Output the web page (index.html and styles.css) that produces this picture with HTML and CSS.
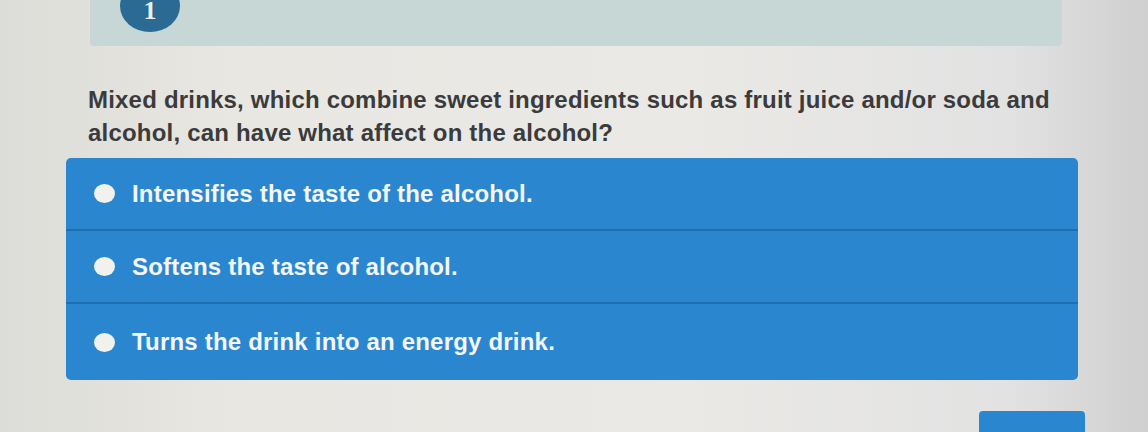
FILE: index.html
```html
<!DOCTYPE html>
<html>
<head>
    <title>Quiz</title>
    <link rel="stylesheet" href="styles.css">
</head>
<body>
    <div class="page">
        <!-- Question header with number badge -->
        <div class="question-head">
            <span class="badge">1</span>
        </div>

        <p class="question">Mixed drinks, which combine sweet ingredients such as fruit juice and/or soda and<br>alcohol, can have what affect on the alcohol?</p>

        <!-- Answer choices -->
        <ul class="choices">
            <li class="choice"><span class="radio"></span>Intensifies the taste of the alcohol.</li>
            <li class="choice"><span class="radio"></span>Softens the taste of alcohol.</li>
            <li class="choice"><span class="radio"></span>Turns the drink into an energy drink.</li>
        </ul>

        <div class="actions">
            <button class="next-btn" type="button"></button>
        </div>
    </div>
</body>
</html>
```

FILE: styles.css
```css
body {
    margin: 0;
    padding: 0;
    height: 432px;
    overflow: hidden;
    font-family: "Liberation Sans", Arial, sans-serif;
    background: linear-gradient(90deg, #dcdcd8 0%, #e8e7e2 20%, #eae9e6 60%, #e2e2e2 88%, #cfcfcf 100%);
}

.page {
    width: 1010px;
    margin: 0 0 0 70px;
}

.question-head {
    margin-left: 20px;
    width: 972px;
    height: 46px;
    background-color: #c6d7d6;
    border-radius: 0 0 4px 4px;
    position: relative;
}

.badge {
    position: absolute;
    left: 30px;
    top: -20px;
    width: 60px;
    height: 52px;
    border-radius: 50%;
    background-color: #2b6a92;
    color: #e9eef0;
    font-family: "Liberation Serif", serif;
    font-weight: bold;
    font-size: 26px;
    display: flex;
    justify-content: center;
    align-items: flex-end;
    line-height: 0.75;
    padding-bottom: 12px;
    box-sizing: border-box;
}

.question {
    margin: 37px 0 0 18px;
    font-size: 24px;
    font-weight: bold;
    line-height: 33px;
    color: #3b3b3b;
    letter-spacing: 0.2px;
    white-space: nowrap;
}

.choices {
    list-style: none;
    margin: 9px 0 0 -4px;
    padding: 0;
    width: 1012px;
    background-color: #2a87cf;
    border-radius: 5px;
    overflow: hidden;
}

.choice {
    display: flex;
    align-items: center;
    height: 71px;
    padding-left: 28px;
    color: #f4f6f8;
    font-size: 24px;
    font-weight: bold;
    letter-spacing: 0.2px;
    border-top: 2px solid #1f6fae;
}

.choice:first-child {
    border-top: none;
    height: 71px;
}

.choice:last-child {
    height: 76px;
}

.radio {
    width: 21px;
    height: 19px;
    border-radius: 50%;
    background-color: #f1f1ee;
    margin-right: 17px;
    flex-shrink: 0;
}

.actions {
    display: flex;
    justify-content: flex-end;
    margin-top: 31px;
    width: 1015px;
}

.next-btn {
    width: 106px;
    height: 30px;
    border: none;
    border-radius: 4px 4px 0 0;
    background-color: #2a87cf;
}
```
